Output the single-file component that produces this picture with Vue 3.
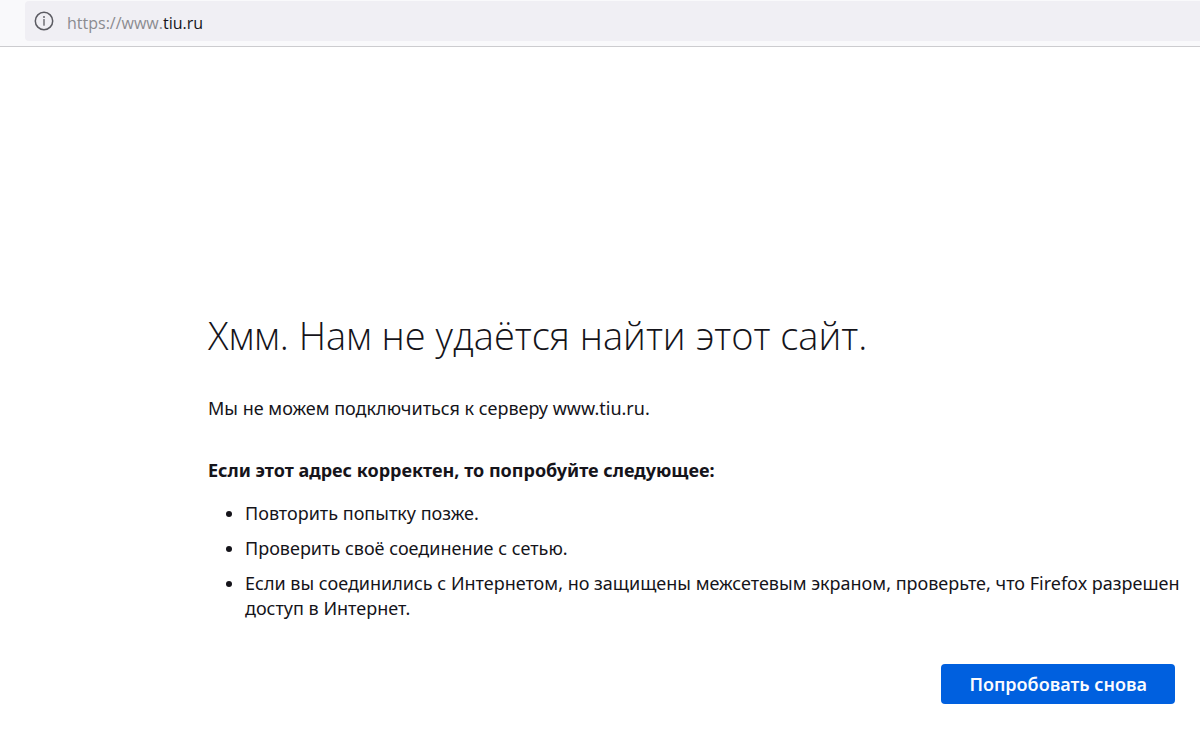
<script setup>
const scheme = 'https://www.'
const host = 'tiu.ru'
const tips = [
  'Повторить попытку позже.',
  'Проверить своё соединение с сетью.',
  'Если вы соединились с Интернетом, но защищены межсетевым экраном, проверьте, что Firefox разрешен доступ в Интернет.'
]
</script>

<template>
  <div class="browser">
    <header class="toolbar">
      <div class="address">
        <svg class="info" viewBox="0 0 20 20" aria-hidden="true">
          <circle cx="10" cy="10" r="8.7" fill="none" stroke="#5b5b62" stroke-width="1.5" />
          <path d="M10 8.6v5.6" stroke="#5b5b62" stroke-width="1.3" stroke-linecap="round" />
          <circle cx="10" cy="6" r="0.9" fill="#5b5b62" />
        </svg>
        <span class="url">{{ scheme }}<span class="host">{{ host }}</span></span>
      </div>
    </header>
    <main class="page">
      <h1>Хмм. Нам не удаётся найти этот сайт.</h1>
      <p class="lead">Мы не можем подключиться к серверу www.tiu.ru.</p>
      <h2>Если этот адрес корректен, то попробуйте следующее:</h2>
      <ul>
        <li v-for="tip in tips" :key="tip">{{ tip }}</li>
      </ul>
      <div class="actions">
        <button type="button">Попробовать снова</button>
      </div>
    </main>
  </div>
</template>

<style>
body {
  margin: 0;
  background: #fff;
}
</style>

<style scoped>
.browser {
  font-family: "Noto Sans", "Open Sans", sans-serif;
  font-size: 18px;
  color: #15141a;
}
.toolbar {
  padding: 1px 0 5px 25px;
  background: #f9f9fb;
  border-bottom: 1px solid #cccccf;
}
.address {
  display: flex;
  align-items: center;
  gap: 13px;
  height: 40px;
  padding: 0 9px;
  border-radius: 4px 0 0 4px;
  background: #f0eff4;
}
.info {
  width: 20px;
  height: 20px;
}
.url {
  padding-top: 3px;
  font-family: "Open Sans", "Noto Sans", sans-serif;
  font-size: 16px;
  line-height: 24px;
  color: #8b8b90;
}
.host {
  color: #15141a;
}
.page {
  padding: 262px 16px 31px 208px;
}
h1 {
  margin: 0;
  font-family: "Open Sans", "Noto Sans", sans-serif;
  font-size: 38px;
  line-height: 52px;
  font-weight: 300;
}
.lead {
  margin: 34px 0 0;
  line-height: 26px;
}
h2 {
  margin: 36px 0 0;
  font-size: 18px;
  line-height: 26px;
  font-weight: 700;
}
ul {
  margin: 18px 0 0;
  padding: 0 0 0 37px;
}
li {
  margin-bottom: 10px;
  line-height: 25px;
}
.actions {
  display: flex;
  justify-content: flex-end;
  margin-top: 43px;
  padding-right: 9px;
}
button {
  min-height: 40px;
  padding: 0 28px;
  border: 0;
  border-radius: 4px;
  background: #0060df;
  color: #fbfbfe;
  font: 600 18px/26px "Noto Sans", "Open Sans", sans-serif;
}
</style>
